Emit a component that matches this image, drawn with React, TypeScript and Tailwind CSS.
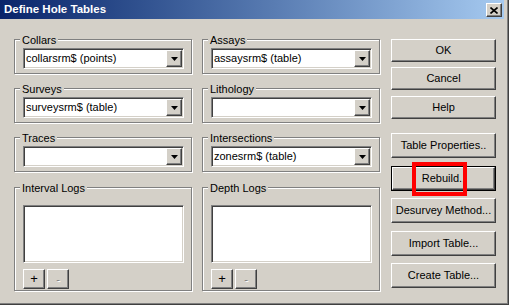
import type { ReactNode } from "react";

const raised =
  "bg-[#d4d0c8] border border-t-white border-l-white border-r-[#404040] border-b-[#404040] shadow-[inset_-1px_-1px_0_#808080]";
const sunken =
  "bg-white border border-t-[#808080] border-l-[#808080] border-r-white border-b-white shadow-[inset_1px_1px_0_#404040,inset_-1px_-1px_0_#d4d0c8]";

function Group({ label, children, className = "" }: { label: string; children: ReactNode; className?: string }) {
  return (
    <div
      className={
        "relative border border-[#808080] shadow-[inset_1px_1px_0_#fff,1px_1px_0_#fff] pl-[8px] pr-[7px] " + className
      }
    >
      <span className="absolute left-[5px] -top-[6px] bg-[#d4d0c8] px-[2px] leading-[13px]">{label}</span>
      {children}
    </div>
  );
}

function DropButton() {
  return (
    <div className={"flex h-[17px] w-[16px] shrink-0 items-center justify-center " + raised}>
      <svg width="7" height="4" viewBox="0 0 7 4">
        <polygon points="0,0 7,0 3.5,4" fill="#000" />
      </svg>
    </div>
  );
}

function Combo({ value = "" }: { value?: string }) {
  return (
    <div className={"flex h-[21px] p-px " + sunken}>
      <div className="flex-1 overflow-hidden whitespace-nowrap pl-[1px] leading-[17px]">{value}</div>
      <DropButton />
    </div>
  );
}

function ComboGroup({ label, value }: { label: string; value?: string }) {
  return (
    <Group label={label} className="pt-[8px] pb-[4px]">
      <Combo value={value} />
    </Group>
  );
}

function LogGroup({ label }: { label: string }) {
  return (
    <Group label={label} className="mt-px pt-[17px] pb-[1px]">
      <div className={"h-[58px] " + sunken} />
      <div className="mt-[6px] flex gap-[2px]">
        <div className={"flex h-[20px] w-[22px] items-center justify-center text-[13px] " + raised}>+</div>
        <div
          className={
            "flex h-[20px] w-[22px] items-center justify-center text-[#808080] [text-shadow:1px_1px_0_#fff] " + raised
          }
        >
          -
        </div>
      </div>
    </Group>
  );
}

function Button({ label, className = "" }: { label: string; className?: string }) {
  return (
    <div className={"flex w-[105px] items-center justify-center " + raised + " " + className}>{label}</div>
  );
}

export default function App() {
  return (
    <div className="flex h-[305px] w-[509px] flex-col border-r border-b border-[#404040] bg-[#d4d0c8] pr-[4px] pb-[2px] font-['Liberation_Sans',Arial,sans-serif] text-[11px] text-black shadow-[inset_-1px_-1px_0_#808080]">
      <div className="flex h-[19px] shrink-0 items-start justify-between bg-linear-to-r from-[#0a246a] to-[#a6caf0]">
        <span className="pl-[4px] pt-[3px] text-[11.5px] leading-[13px] font-bold text-white">Define Hole Tables</span>
        <div className={"mt-[3px] mr-[2px] flex h-[14px] w-[16px] items-center justify-center " + raised}>
          <svg width="8" height="7" viewBox="0 0 8 7">
            <path d="M0.5 0.5 L7.5 6.5 M7.5 0.5 L0.5 6.5" stroke="#000" strokeWidth="1.6" />
          </svg>
        </div>
      </div>

      <div className="flex gap-[11px] pt-[20px] pl-[14px]">
        <div className="grid grid-cols-[178px_178px] gap-x-[10px] gap-y-[14px]">
          <ComboGroup label="Collars" value="collarsrm$ (points)" />
          <ComboGroup label="Assays" value="assaysrm$ (table)" />
          <ComboGroup label="Surveys" value="surveysrm$ (table)" />
          <ComboGroup label="Lithology" />
          <ComboGroup label="Traces" />
          <ComboGroup label="Intersections" value="zonesrm$ (table)" />
          <LogGroup label="Interval Logs" />
          <LogGroup label="Depth Logs" />
        </div>

        <div className="flex flex-col">
          <Button label="OK" className="h-[23px]" />
          <Button label="Cancel" className="mt-[5px] h-[23px]" />
          <Button label="Help" className="mt-[6px] h-[23px]" />
          <Button label="Table Properties.." className="mt-[14px] h-[25px]" />
          <div className="relative mt-[8px] h-[25px] w-[105px] border border-black">
            <div className={"flex h-full w-full items-center justify-center " + raised}>Rebuild..</div>
            <div className="absolute left-[20px] -top-[5px] h-[34px] w-[55px] border-[4px] border-[#ff0000]" />
          </div>
          <Button label="Desurvey Method..." className="mt-[7px] h-[25px]" />
          <Button label="Import Table..." className="mt-[8px] h-[25px]" />
          <Button label="Create Table..." className="mt-[7px] h-[25px]" />
        </div>
      </div>
    </div>
  );
}
